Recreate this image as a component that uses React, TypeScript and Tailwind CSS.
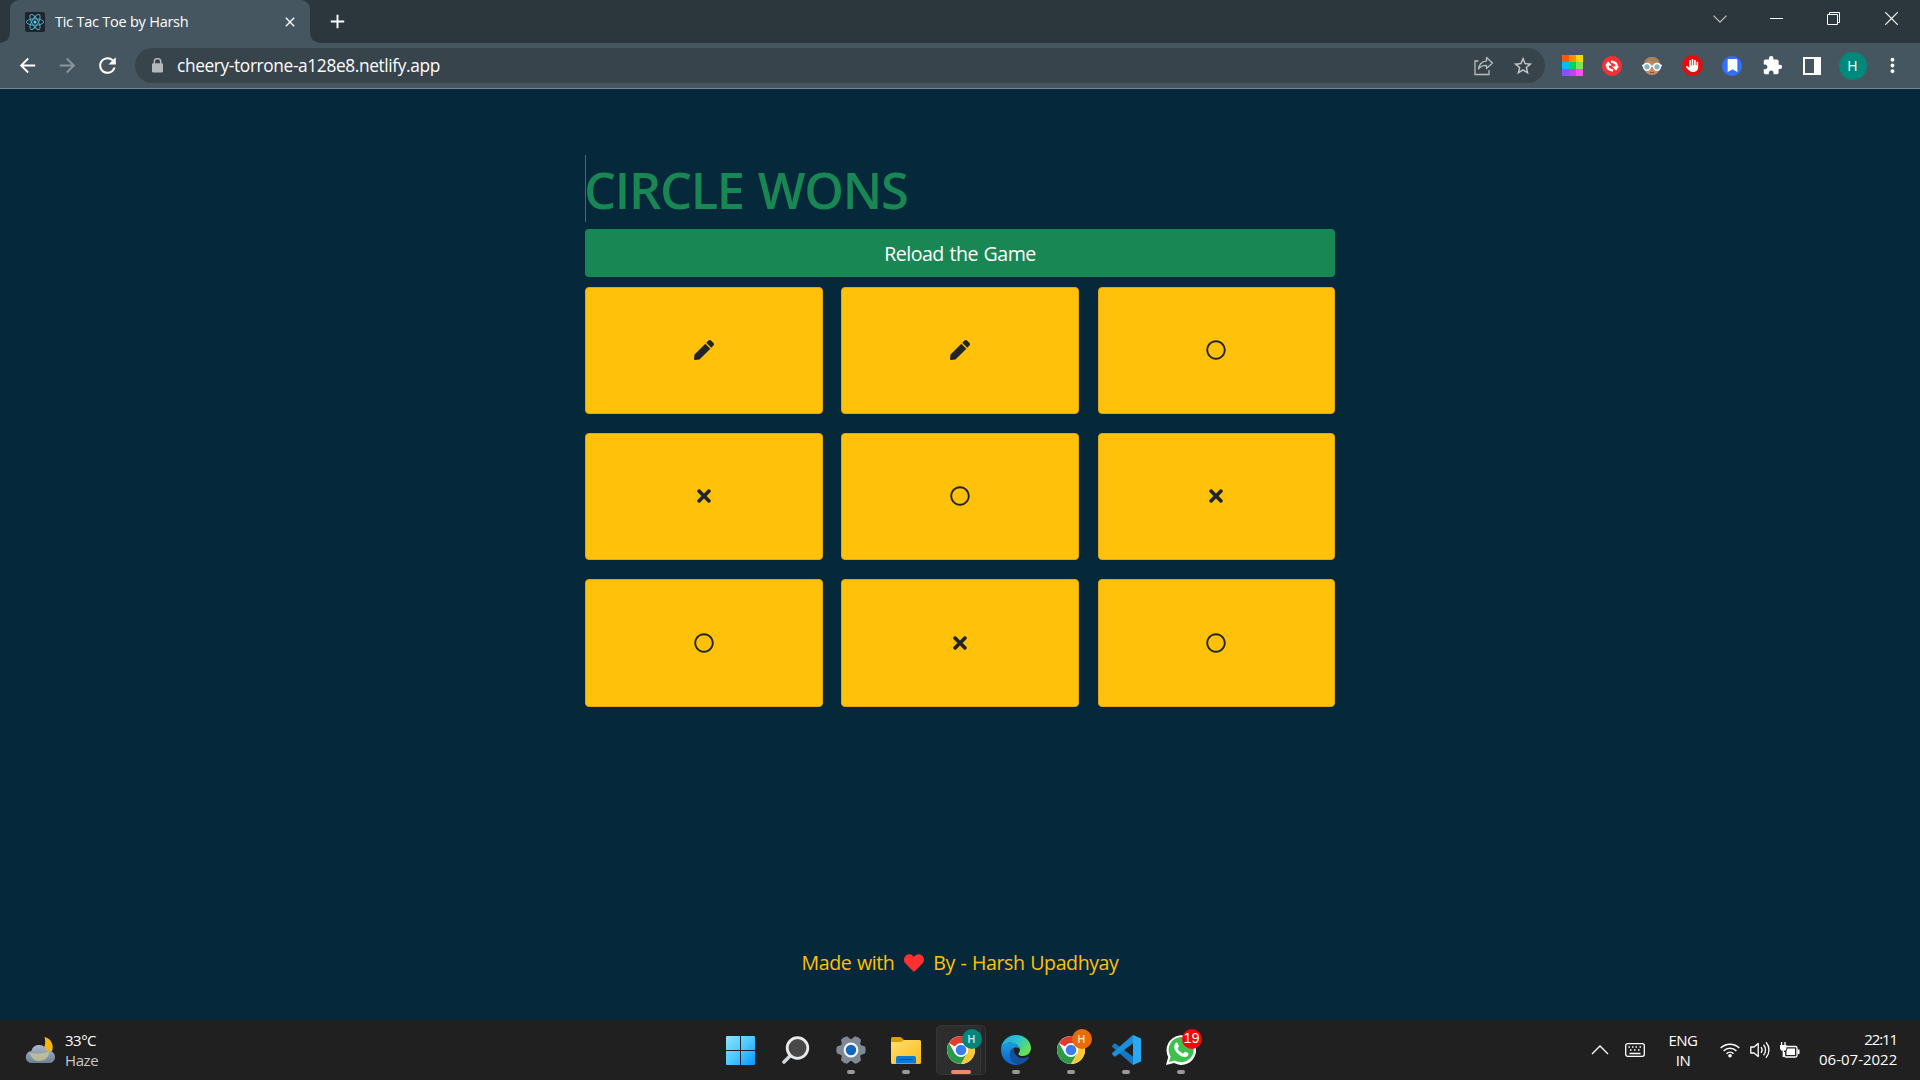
import React from "react";
import { FaPen, FaRegCircle, FaTimes, FaHeart, FaBookmark } from "react-icons/fa";
import { FaHand } from "react-icons/fa6";
import { MdExtension, MdStarBorder, MdRefresh, MdArrowBack, MdArrowForward, MdMoreVert, MdClose, MdAdd } from "react-icons/md";

const cells = ["pen", "pen", "circle", "cross", "circle", "cross", "circle", "cross", "circle"];

function Cell({ kind }: { kind: string }) {
  return (
    <div className="flex items-center justify-center rounded-[4px] border border-[#dfa90b] bg-[#ffc10a] pb-px text-[20px] text-[#212529]">
      {kind === "pen" && <FaPen />}
      {kind === "circle" && <FaRegCircle />}
      {kind === "cross" && <FaTimes />}
    </div>
  );
}

function ReactLogo() {
  return (
    <svg className="size-5 rounded-[2px] bg-[#20232a]" viewBox="0 0 20 20" fill="none" stroke="#4fb9d3" strokeWidth="0.9">
      <ellipse cx="10" cy="10" rx="8.6" ry="3.2" />
      <ellipse cx="10" cy="10" rx="8.6" ry="3.2" transform="rotate(60 10 10)" />
      <ellipse cx="10" cy="10" rx="8.6" ry="3.2" transform="rotate(120 10 10)" />
      <circle cx="10" cy="10" r="1.5" fill="#61dafb" stroke="none" />
    </svg>
  );
}

function RainbowIcon() {
  return (
    <div className="grid size-[21px] grid-cols-3 grid-rows-3">
      <i className="bg-[#ff5a00]" /><i className="bg-[#ff9100]" /><i className="bg-[#ffd500]" />
      <i className="bg-[#00bfff]" /><i className="bg-[#00d45a]" /><i className="bg-[#80e04f]" />
      <i className="bg-[#8a4fff]" /><i className="bg-[#c93cff]" /><i className="bg-[#ff4ff5]" />
    </div>
  );
}

function SyncIcon() {
  return (
    <svg className="size-5" viewBox="0 0 20 20">
      <circle cx="10" cy="10" r="10" fill="#f92f35" />
      <g fill="none" stroke="#fff" strokeWidth="2.4">
        <path d="M9 5.400 12.500 6.500A3.900 3.900 0 0 1 14.300 11" />
        <path d="M11 14.600 7.500 13.500A3.900 3.900 0 0 1 5.700 9" />
      </g>
      <path d="M3 9.800 6 5.200l4 4.200ZM17 10.200 14 14.800l-4-4.200Z" fill="#fff" />
    </svg>
  );
}

function FaceIcon() {
  return (
    <svg className="h-[20px] w-[20px]" viewBox="0 0 20 20">
      <path d="M2.500 9C2.500 4 5.500 1 10 1s7.500 3 7.500 8v3c0 4-3 7-7.500 7s-7.500-3-7.500-7Z" fill="#c68a63" />
      <path d="M2 9C2 4 5 1 10 1s8 3 8 8l-3-3C11 7 8 6 7 4 6 7 4 8 2 9Z" fill="#a8835a" />
      <g fill="#7fb4bd" stroke="#fff" strokeWidth="1.500">
        <circle cx="5" cy="10.800" r="3.400" />
        <circle cx="15" cy="10.800" r="3.400" />
      </g>
      <path d="M8.400 10.300h3.200M0 9.500h2M18 9.500h2" stroke="#fff" strokeWidth="1.500" />
      <path d="M8 16.500h4" stroke="#8e4b3a" strokeWidth="1" />
    </svg>
  );
}

function HandIcon() {
  return (
    <div className="relative flex size-[21px] items-center justify-center">
      <svg className="absolute size-[21px]" viewBox="0 0 21 21">
        <path d="M6.300.5h8.400l5.800 5.800v8.400l-5.800 5.800H6.300L.5 14.700V6.300Z" fill="#e40d0d" />
      </svg>
      <FaHand className="relative h-[15px] w-[13px] text-white" />
    </div>
  );
}

function Toolbar() {
  return (
    <div className="flex h-[45px] shrink-0 items-center bg-[#455660] text-white">
      <MdArrowBack className="ml-[16px] size-[23px]" />
      <MdArrowForward className="ml-[17px] size-[23px] text-[#8a969c]" />
      <MdRefresh className="ml-[16px] size-[25px]" />
      <div className="ml-[15px] flex h-[35px] w-[1410px] items-center rounded-full bg-[#38444b] pr-[11px] pl-[16px]">
        <svg className="h-[15px] w-[13px]" viewBox="0 0 13 15">
          <path d="M3.300 6V3.800a3.200 3.200 0 0 1 6.400 0V6" fill="none" stroke="#b3b9bc" strokeWidth="1.500" />
          <rect x="1" y="5.300" width="11" height="9.200" rx="1.300" fill="#b3b9bc" />
        </svg>
        <span className="ml-[13px] text-[17.300px] tracking-[-0.360px] whitespace-nowrap">cheery-torrone-a128e8.netlify.app</span>
        <span className="grow" />
        <svg className="size-[20px]" viewBox="0 0 20 20" fill="none" stroke="#b8bdc0" strokeWidth="1.300">
          <path d="M4.500 5H1v13.500h14V14" />
          <path d="M12.500 1.500 18.500 7l-6 5.500V9.300C8.500 9.300 6 10.500 4.500 13c.5-4.500 3.500-7.500 8-8.200Z" strokeLinejoin="round" />
        </svg>
        <MdStarBorder className="ml-[18px] size-[22px] text-[#c3c8ca]" />
      </div>
      <div className="ml-[7px] grid w-[360px] grid-cols-9 items-center justify-items-center">
        <RainbowIcon />
        <SyncIcon />
        <FaceIcon />
        <HandIcon />
        <div className="flex size-5 items-center justify-center rounded-full bg-[#3370ff]"><FaBookmark className="h-[13px] w-[13px]" /></div>
        <MdExtension className="size-[21px]" />
        <div className="h-[18px] w-[18px] border-2 border-r-[7px] border-white" />
        <div className="ml-px flex size-7 items-center justify-center rounded-full bg-[#00897b] text-[14px]">H</div>
        <MdMoreVert className="size-[23px]" />
      </div>
    </div>
  );
}

function ChromeIcon({ badge }: { badge: string }) {
  return (
    <div className="relative size-[28px]">
      <svg className="size-[28px]" viewBox="0 0 28 28">
        <circle cx="14" cy="14" r="14" fill="#fff" />
        <path d="M14 14 1.880 7A14 14 0 0 1 26.120 7H14Z" fill="#e33b2e" />
        <path d="M1.880 7A14 14 0 0 0 14 28l6.060-10.500L14 14 7.900 17.500Z" fill="#2a9a48" />
        <path d="M26.120 7A14 14 0 0 1 14 28l6.060-10.500A7 7 0 0 0 14 7Z" fill="#fcc934" />
        <circle cx="14" cy="14" r="7" fill="#fff" />
        <circle cx="14" cy="14" r="5.300" fill="#3b7ded" />
      </svg>
      <div className={"absolute -top-[7px] left-[15px] flex size-5 items-center justify-center rounded-full text-[11px] font-semibold text-white/80 " + badge}>H</div>
    </div>
  );
}

function Slot({ children, bar = "bg-[#999] w-2" }: { children: React.ReactNode; bar?: string }) {
  return (
    <div className="relative flex h-[50px] w-[55px] items-center justify-center">
      {children}
      <span className={"absolute bottom-px h-1 rounded-full " + bar} />
    </div>
  );
}

const tooth = [0, 60, 120, 180, 240, 300];

function Taskbar() {
  return (
    <div className="flex h-[60px] shrink-0 items-center bg-[#202020] text-white">
      <div className="flex w-[713px] items-center pl-[25px]">
        <svg className="size-[30px]" viewBox="0 0 30 30">
          <defs>
            <linearGradient id="cloud" x1="0" y1="0" x2="0" y2="1"><stop stopColor="#a9b9c9" /><stop offset="1" stopColor="#6d8196" /></linearGradient>
          </defs>
          <path d="M19.500 2c6 1 10 8 7.500 14l-4 4-7-3C20 13 21 8 19.500 2Z" fill="#fbb510" />
          <path d="M7 28a6 6 0 0 1-.5-12C7 12.500 10 10 14 10c4 0 6.500 2 7.500 5.500C26 15 30 17.500 30 22c0 4-3 6-6 6Z" fill="url(#cloud)" />
          <path d="M5 18c8 1.500 14 .5 19-2 1 6-4 10-10 10-5 0-8-3-9-8Z" fill="#cfc793" opacity=".75" />
        </svg>
        <div className="ml-[10px] text-[15px] leading-5 tracking-[-0.500px]">
          <div>33°C</div>
          <div className="tracking-[-0.400px] text-[#c8c8c8]">Haze</div>
        </div>
      </div>
      <div className="flex items-center">
        <Slot bar="hidden">
          <svg className="size-[29px]" viewBox="0 0 29 29">
            <defs><linearGradient id="win" x1="0" y1="0" x2="1" y2="1"><stop stopColor="#8be3ff" /><stop offset=".5" stopColor="#4cc9ff" /><stop offset="1" stopColor="#0a95ff" /></linearGradient></defs>
            <path d="M1 0h13v14H0V1a1 1 0 0 1 1-1ZM15 0h13a1 1 0 0 1 1 1v13H15ZM0 15h14v14H1a1 1 0 0 1-1-1ZM15 15h14v13a1 1 0 0 1-1 1H15Z" fill="url(#win)" />
          </svg>
        </Slot>
        <Slot bar="hidden">
          <svg className="size-[28px]" viewBox="0 0 28 28">
            <path d="M7.500 20.500 2 26" stroke="#d2d6d9" strokeWidth="3.600" strokeLinecap="round" />
            <circle cx="15.500" cy="12" r="10.300" fill="#484848" stroke="#e8ebee" strokeWidth="2.800" />
          </svg>
        </Slot>
        <Slot>
          <svg className="size-[30px]" viewBox="-15 -15 30 30">
            <g fill="#7e8993">
              <circle r="11" />
              {tooth.map((a) => <path key={a} d="M9-5.200 14-3.500Q15.400 0 14 3.500L9 5.200Z" transform={`rotate(${a})`} />)}
            </g>
            <circle r="6.300" fill="#1266bd" stroke="#f4f6f8" strokeWidth="2.200" />
          </svg>
        </Slot>
        <Slot>
          <svg className="h-[27px] w-[30px]" viewBox="0 0 30 27">
            <defs><linearGradient id="folder" x1="0" y1="0" x2="1" y2="1"><stop stopColor="#ffdf73" /><stop offset="1" stopColor="#fdbb17" /></linearGradient></defs>
            <path d="M0 8V1.500Q0 0 1.500 0H9q1.500 0 2.500 1.500L13 3v5Z" fill="#e09b06" />
            <path d="M0 5h10l3-2h15.500Q30 3 30 4.500V25.500Q30 27 28.500 27h-27Q0 27 0 25.500Z" fill="url(#folder)" />
            <path d="M5 26.500V21q0-2 2-2h16q2 0 2 2v5.500Z" fill="#0e79d0" />
            <path d="M9 22.500h12" stroke="#0a4f91" strokeWidth="1.200" strokeLinecap="round" />
          </svg>
        </Slot>
        <div className="relative">
          <span className="absolute top-0 left-[3px] h-full w-[50px] rounded-[5px] border border-[#363636] bg-[#272727]" />
          <span className="absolute top-0 left-[3px] h-full w-[45px] rounded-[5px] border border-[#363636] bg-[#2d2d2d]" />
          <Slot bar="bg-[#f5876a] w-5"><ChromeIcon badge="bg-[#00857a]" /></Slot>
        </div>
        <Slot>
          <svg className="size-[30px]" viewBox="0 0 30 30">
            <defs>
              <linearGradient id="edgeTop" x1="0" y1="0" x2="1" y2=".6"><stop stopColor="#1fa7e8" /><stop offset=".5" stopColor="#2bc3d2" /><stop offset="1" stopColor="#6be34a" /></linearGradient>
              <linearGradient id="edgeLeft" x1="0" y1="0" x2="0" y2="1"><stop stopColor="#1b9de2" /><stop offset="1" stopColor="#0b62c4" /></linearGradient>
            </defs>
            <path d="M0 14A15 15 0 0 1 15 0c9 0 15 6.500 15 13 0 5-4 8-8 8-3 0-5-1-4.500-2.500.5-1.200 1.500-1.800 1.500-4C19 11 14 7.500 8.500 7.500 4 7.500 1 10.500 0 14Z" fill="url(#edgeTop)" />
            <path d="M0 15C0 10 4 7.500 8.500 7.500c6 0 10.500 3.500 10.500 7 0 0-1.500-2-4-2-3.500 0-6 3-5.500 7C10 25 14 29 19 29.500A15 15 0 0 1 0 15Z" fill="url(#edgeLeft)" />
            <path d="M13 13c-3 1.500-5 5-4 9.500 1 4 5 7 9 7 4-.5 8-3.500 10-7 .3-.7-.3-1-.9-.7C21 25 12 22 13 13Z" fill="#15509e" />
          </svg>
        </Slot>
        <Slot><ChromeIcon badge="bg-[#ea6a05]" /></Slot>
        <Slot>
          <svg className="size-[30px]" viewBox="0 0 30 30">
            <path d="M1 11 3 8.700q.8-.7 1.700 0L22.500 22v8q-.8 0-1.500-.8L.7 11.600Q.3 11.300 1 11Z" fill="#1479c4" />
            <path d="M1 19 3 21.300q.8.7 1.700 0L22.500 8V0q-.8 0-1.500.8L.7 18.400Q.3 18.700 1 19Z" fill="#1b8fdb" />
            <path d="M22 0 30 3.500v23L22 30Z" fill="#2aa9f3" />
          </svg>
        </Slot>
        <Slot>
          <div className="relative size-[30px]">
            <svg className="size-[30px]" viewBox="0 0 30 30">
              <path d="M0 30 2.200 22A14.800 14.800 0 1 1 8 28Z" fill="#fff" />
              <path d="M3 27 4.700 21.500A12.500 12.500 0 1 1 8.800 25.400Z" fill="#3cc04f" />
              <path d="M9.500 8.200c.7-.8 1.800-.8 2.200 0l1.200 2.700c.2.700-1.200 1.700-1.300 2.300.8 2.400 3 4.300 5.400 5.200.8 0 1.700-2 2.500-1.700l2.600 1.300c.8.500.4 2.400-.7 3.200-2.400 1.800-6.400.4-9.700-2.800C8 15 7.300 10.800 9.500 8.200Z" fill="#fff" />
            </svg>
            <div className="absolute -top-[6px] left-[16px] flex size-5 items-center justify-center rounded-full bg-[#f80505] font-['Liberation_Sans'] text-[14.500px]">19</div>
          </div>
        </Slot>
      </div>
      <div className="ml-auto flex items-center pr-[23px]">
        <svg className="h-[10px] w-[18px]" viewBox="0 0 18 10" fill="none" stroke="#fff" strokeWidth="1.300"><path d="m1 9 8-8 8 8" /></svg>
        <svg className="ml-[16px] h-[14px] w-5" viewBox="0 0 20 14" fill="none" stroke="#fff" strokeWidth="1.300">
          <rect x=".7" y=".7" width="18.600" height="12.600" rx="2" />
          <path d="M3.500 4h1.500M7 4h1.500M10.500 4h1.500M14.500 4h1.500M5 7h1.500M9 7h1.500M13 7h1.500M4.500 10.500h11" />
        </svg>
        <div className="ml-[23px] w-[30px] text-center text-[15px] leading-5 tracking-[-0.500px]">
          <div>ENG</div>
          <div>IN</div>
        </div>
        <svg className="ml-[22px] h-[16px] w-5" viewBox="0 0 20 16" fill="none" stroke="#fff" strokeWidth="1.500">
          <path d="M.7 6a13.200 13.200 0 0 1 18.600 0M3.600 9a9 9 0 0 1 12.800 0M6.500 11.700a5 5 0 0 1 7 0" />
          <circle cx="10" cy="13.800" r="1.800" fill="#fff" stroke="none" />
        </svg>
        <svg className="ml-[10px] h-[18px] w-5" viewBox="0 0 20 18" fill="none" stroke="#fff" strokeWidth="1.300">
          <path d="M.8 6H4l4.200-3.600v13.200L4 12H.8Z" strokeLinejoin="round" />
          <path d="M11 6.200a4.500 4.500 0 0 1 0 5.600M13.500 3.700a8 8 0 0 1 0 10.600M16 1.300a11.500 11.500 0 0 1 0 15.400" />
        </svg>
        <svg className="ml-[10px] h-[17px] w-5" viewBox="0 0 20 17" fill="none" stroke="#fff" strokeWidth="1.300">
          <path d="M6 4.500h9.500Q17 4.500 17 6v7.500q0 1.500-1.500 1.500H6q-1.500 0-1.500-1.500V10" />
          <path d="M7.500 6.500h7.500v6.500H6.500V9ZM17.500 7.500h2v4.500h-2ZM0 3h6.500v3.500Q6 9 3.300 9 .5 9 0 6.500Z" fill="#fff" stroke="none" />
          <path d="M1.600 0v3M5 0v3M3.300 9v6" />
        </svg>
        <div className="ml-[19px] w-[78px] pb-[2px] text-right text-[15px] leading-5 whitespace-nowrap">
          <div className="tracking-[-1.100px]">22:11</div>
          <div>06-07-2022</div>
        </div>
      </div>
    </div>
  );
}

export default function App() {
  return (
    <div className="flex h-[1080px] w-[1920px] flex-col overflow-hidden bg-[#05283b] font-['Open_Sans','Noto_Sans',sans-serif]">
      <div className="flex h-[43px] shrink-0 bg-[#2c373d] text-white">
        <div className="flex w-[10px] bg-[#455660]"><span className="grow rounded-br-[10px] bg-[#2c373d]" /></div>
        <div className="flex w-[300px] items-center rounded-t-[9px] bg-[#455660] pr-[12px] pl-[15px]">
          <ReactLogo />
          <span className="ml-[10px] text-[14.500px] tracking-[-0.300px] [word-spacing:0.3px] whitespace-nowrap">Tic Tac Toe by Harsh</span>
          <MdClose className="ml-auto size-4" />
        </div>
        <div className="flex w-[10px] bg-[#455660]"><span className="grow rounded-bl-[10px] bg-[#2c373d]" /></div>
        <MdAdd className="mt-[10px] ml-[6px] size-[23px]" />
        <div className="mt-[12px] mr-[22px] ml-auto flex h-[13px] items-center">
          <svg className="h-[8px] w-[14px]" viewBox="0 0 14 8" fill="none" stroke="#c5c9cb" strokeWidth="1.100"><path d="m.5.700 6.500 6.500 6.500-6.500" /></svg>
          <span className="ml-[43px] h-px w-[13px] bg-white" />
          <svg className="ml-[44px] size-[13px]" viewBox="0 0 13 13" fill="none" stroke="#fff"><path d="M.5 2.500h10v10H.5ZM2.500 2.500v-2h10v10h-2" /></svg>
          <svg className="ml-[45px] size-[13px]" viewBox="0 0 13 13" fill="none" stroke="#fff" strokeWidth="1.200"><path d="m.3.300 12.400 12.400M12.700.300.300 12.700" /></svg>
        </div>
      </div>
      <Toolbar />
      <div className="h-px shrink-0 bg-[#78858c]" />
      <main className="flex h-[931px] shrink-0 flex-col items-center">
        <div className="mt-[66px] w-[750px]">
          <h1 className="h-[67px] border-l border-[#198754] indent-[-2px] text-[50.500px] leading-[69px] font-semibold tracking-[-1.250px] [word-spacing:2px] whitespace-nowrap text-[#198754]">CIRCLE WONS</h1>
          <div className="mt-[7px] flex h-12 items-center justify-center rounded-[4px] bg-[#198754] pt-[2px] text-[19.600px] tracking-[-0.500px] [word-spacing:1px] text-white">Reload the Game</div>
          <div className="mt-[10px] grid grid-cols-[237.7px_237.7px_237.7px] grid-rows-[127px_127px_128px] gap-x-[18.6px] gap-y-[19px]">
            {cells.map((kind, i) => <Cell key={i} kind={kind} />)}
          </div>
        </div>
        <footer className="mt-[242px] flex h-[28px] items-center text-[19.600px] tracking-[-0.440px] [word-spacing:1px] whitespace-nowrap text-[#ffc107]">
          <span>Made with</span>
          <FaHeart className="mr-[9px] ml-[10px] size-5 text-[#ff302f]" />
          <span>By - Harsh Upadhyay</span>
        </footer>
      </main>
      <Taskbar />
    </div>
  );
}
